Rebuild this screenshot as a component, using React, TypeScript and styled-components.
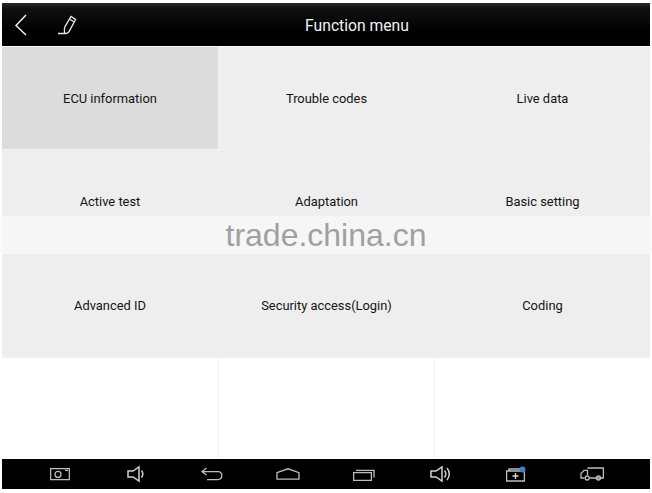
import { FC } from 'react';
import styled, { createGlobalStyle } from 'styled-components';

const GlobalStyle = createGlobalStyle`
  html, body {
    margin: 0;
    padding: 0;
    background: #fff;
  }
  body {
    font-family: Roboto, "Liberation Sans", sans-serif;
  }
`;

const Page = styled.div`
  position: relative;
  width: 652px;
  height: 493px;
  overflow: hidden;
  padding: 3px 2px 0;
  box-sizing: border-box;
  background: #fff;
`;

const Header = styled.header`
  display: flex;
  align-items: center;
  position: relative;
  height: 43px;
  padding-left: 12px;
  gap: 29px;
  background: linear-gradient(#2a2a2a 0, #101010 12%, #000 70%);
`;

const Title = styled.h1`
  position: absolute;
  left: 0;
  right: 0;
  margin: 0;
  padding: 2px 0 0 62px;
  text-align: center;
  font-size: 15.7px;
  font-weight: 400;
  color: #f2f2f2;
`;

const Grid = styled.main`
  display: grid;
  grid-template-columns: 216px 215px 215px;
  grid-template-rows: 102px 103px 103px 101px;
  column-gap: 1px;
  row-gap: 1px;
  height: 412px;
  margin-top: 1px;
  background: #f2f2f2;
`;

const Cell = styled.div<{ $active?: boolean; $empty?: boolean }>`
  display: flex;
  align-items: center;
  justify-content: center;
  font-size: 12.9px;
  color: #141414;
  background: ${(p) => (p.$empty ? '#fff' : p.$active ? '#dcdcdc' : '#eeeeee')};
`;

const NavBar = styled.nav`
  display: grid;
  grid-template-columns: repeat(8, 76px);
  align-items: center;
  justify-items: center;
  height: 30px;
  padding-left: 20px;
  background: #000;
`;

const NavSlot = styled.div`
  display: flex;
  align-items: center;
  justify-content: center;
  width: 100%;
`;

const Band = styled.div`
  position: absolute;
  left: 0;
  right: 0;
  top: 216px;
  height: 38px;
  display: flex;
  align-items: center;
  justify-content: center;
  background: rgba(250, 250, 250, 0.72);
`;

const Watermark = styled.span`
  font-family: "Liberation Sans", Arial, sans-serif;
  font-size: 32px;
  color: #a0a0a0;
`;

const items = [
  'ECU information',
  'Trouble codes',
  'Live data',
  'Active test',
  'Adaptation',
  'Basic setting',
  'Advanced ID',
  'Security access(Login)',
  'Coding',
];

const stroke = { fill: 'none', stroke: '#bdbdbd', strokeWidth: 1.3 };
const bright = { fill: 'none', stroke: '#d0d0d0', strokeWidth: 1.5 };

const BackIcon: FC = () => (
  <svg width="14" height="24" viewBox="0 0 14 24">
    <path d="M12 2 L2 12.5 L12 22" fill="none" stroke="#eee" strokeWidth="1.5" />
  </svg>
);

const PenIcon: FC = () => (
  <svg width="22" height="24" viewBox="0 0 22 24">
    <path
      d="M1 20.5 H9 C11 20.5 12 19 12.6 17.6 L18.6 6.5 L14 3.5 L8 13.6 C7.4 15 7 17.5 7.6 20"
      fill="none"
      stroke="#e8e8e8"
      strokeWidth="1.3"
    />
    <path d="M13 6.5 L17.4 9" fill="none" stroke="#e8e8e8" strokeWidth="1.3" />
  </svg>
);

const icons = [
  <svg key="camera" width="20" height="14" viewBox="0 0 20 14">
    <rect x="0.6" y="1.6" width="18.8" height="11" {...stroke} />
    <circle cx="8" cy="7.4" r="3" {...stroke} />
    <path d="M15 3.4 H18" {...stroke} />
  </svg>,
  <svg key="volume-down" width="18" height="18" viewBox="0 0 18 18">
    <path d="M1 6 H6 L12 2 V16 L6 12 H1 Z" {...bright} />
    <path d="M14.5 5.5 C16 7.5 16 10.5 14.5 12.5" {...bright} />
  </svg>,
  <svg key="back" width="22" height="14" viewBox="0 0 22 14">
    <path d="M5.5 1 L1 4.6 L5.5 8 M1 4.6 H17 C22 4.6 22 12.6 17 12.6 H6" {...stroke} />
  </svg>,
  <svg key="home" width="24" height="12" viewBox="0 0 24 12">
    <path d="M1 4.6 L12 0.8 L23 4.6 V11.2 H1 Z" {...stroke} />
  </svg>,
  <svg key="recent" width="22" height="13" viewBox="0 0 22 13">
    <rect x="0.6" y="4.6" width="17.8" height="7.8" {...stroke} />
    <path d="M3 2.4 H21 V9.6" {...stroke} />
  </svg>,
  <svg key="volume-up" width="21" height="18" viewBox="0 0 21 18">
    <path d="M1 6 H6 L12 2 V16 L6 12 H1 Z" {...bright} />
    <path d="M14.5 5.5 C16 7.5 16 10.5 14.5 12.5" {...bright} />
    <path d="M17 3 C20 6.5 20 11.5 17 15" {...bright} />
  </svg>,
  <svg key="add" width="20" height="16" viewBox="0 0 20 16">
    <path d="M0.6 5 H18.4 V15 H0.6 Z M3 5 V3 H14" {...stroke} />
    <path d="M9.5 7 V13 M6.5 10 H12.5" fill="none" stroke="#d8d8d8" strokeWidth="1.3" />
    <circle cx="16.5" cy="3.5" r="3" fill="#3f7fc4" />
  </svg>,
  <svg key="truck" width="24" height="14" viewBox="0 0 24 14">
    <path d="M7.5 1 H23.4 V11 H10 M4.5 11 H1 V6.5 L4 3.4 H7.5 V8" {...stroke} />
    <circle cx="7.2" cy="11" r="2" {...stroke} />
    <circle cx="18.5" cy="11" r="2" {...stroke} />
  </svg>,
];

const App: FC = () => (
  <>
    <GlobalStyle />
    <Page>
      <Header>
        <BackIcon />
        <PenIcon />
        <Title>Function menu</Title>
      </Header>
      <Grid>
        {items.map((label, i) => (
          <Cell key={label} $active={i === 0}>
            {label}
          </Cell>
        ))}
        <Cell $empty />
        <Cell $empty />
        <Cell $empty />
      </Grid>
      <NavBar>
        {icons.map((icon) => (
          <NavSlot key={icon.key}>{icon}</NavSlot>
        ))}
      </NavBar>
      <Band>
        <Watermark>trade.china.cn</Watermark>
      </Band>
    </Page>
  </>
);

export default App;
